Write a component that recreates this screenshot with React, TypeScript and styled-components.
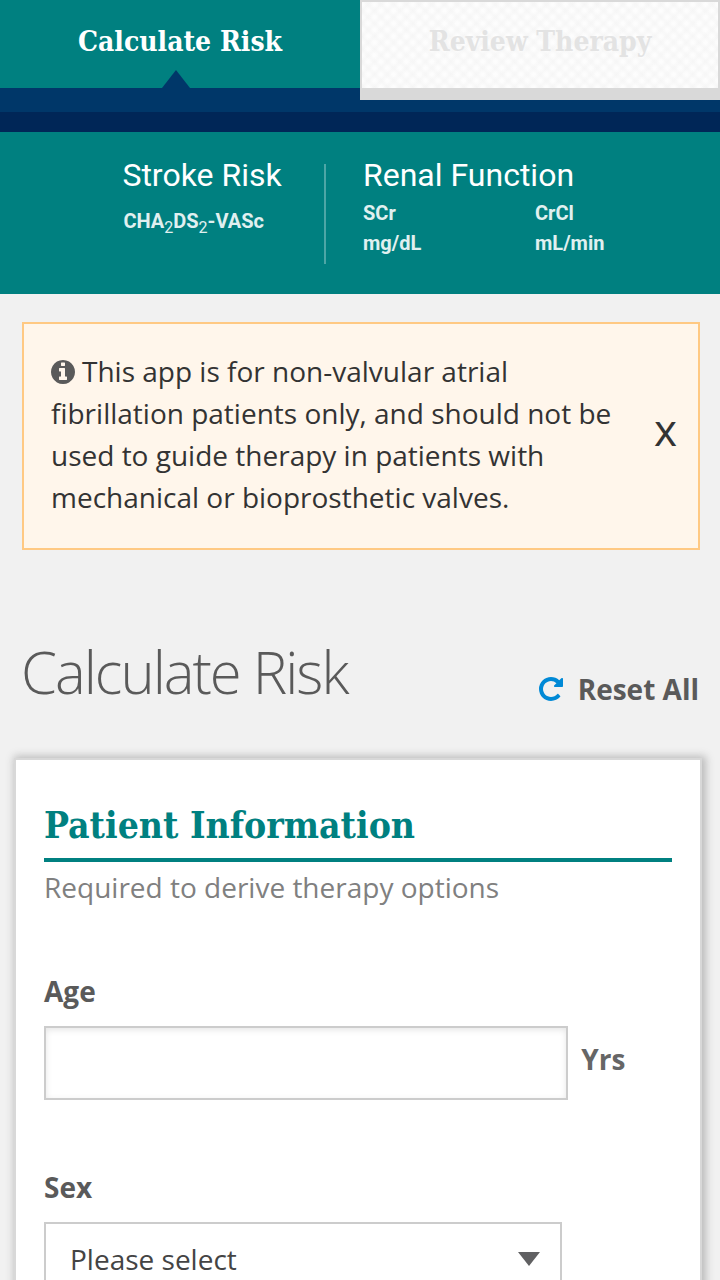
import React from "react";
import styled, { createGlobalStyle } from "styled-components";

const teal = "#008080";
const slab = `"DejaVu Serif Condensed", "DejaVu Serif", serif`;

const GlobalStyle = createGlobalStyle`
  *, *::before, *::after { box-sizing: border-box; }
  body {
    margin: 0;
    background: #f1f1f1;
    color: #5a5a5a;
    font: 400 28px/42px "Open Sans", sans-serif;
  }
  h1, h2, h3, p { margin: 0; }
  button, input, select { font: inherit; color: inherit; border-radius: 0; }
  button { padding: 0; border: 0; background: none; cursor: pointer; }
`;

const Tabs = styled.nav`
  display: grid;
  grid-template-columns: 1fr 1fr;
  align-items: start;
  height: 132px;
  background: #003769;
  border-bottom: 20px solid #002657;
`;

const Tab = styled.button`
  position: relative;
  height: 88px;
  padding-bottom: 4px;
  background: ${teal};
  color: #fff;
  font: 700 28px/36px ${slab};

  &[aria-selected="true"]::after {
    content: "";
    position: absolute;
    bottom: 0;
    left: calc(50% - 18px);
    border: 14px solid transparent;
    border-top: 0;
    border-bottom: 18px solid #003769;
  }

  &:disabled {
    height: 100px;
    border: 2px solid #d9d9d9;
    border-bottom-width: 12px;
    padding-bottom: 6px;
    color: #e3e3e3;
    background:
      repeating-linear-gradient(45deg, #f3f3f370 0 1px, transparent 4px 6px, #f3f3f370 9px),
      repeating-linear-gradient(-45deg, #f3f3f370 0 1px, transparent 4px 6px, #f3f3f370 9px),
      #fdfdfd;
  }
`;

const Summary = styled.section`
  display: flex;
  min-height: 162px;
  padding: 32px 0 30px;
  background: ${teal};
  color: #fff;
  font-family: Roboto, sans-serif;
`;

const StrokeRisk = styled.div`
  width: calc(45% + 2px);
  padding-left: 17%;
  border-right: 2px solid #4da6a6;
`;

const RenalFunction = styled.div`
  flex: 1;
  padding-left: 37px;
`;

const SummaryTitle = styled.h2`
  font-size: 32px;
  font-weight: 400;
  line-height: 22px;
`;

const Score = styled.p`
  margin: 20px 0 0 1px;
  color: #e0f0f0;
  font-size: 20px;
  font-weight: 700;
  line-height: 30px;
`;

const Sub = styled.sub`
  font-size: 16px;
  font-weight: 400;
  line-height: 0;
`;

const Results = styled.dl`
  display: grid;
  grid-template-columns: 172px 1fr;
  margin: 12px 0 0;
  color: #e0f0f0;
  font-size: 20px;
  font-weight: 700;
  line-height: 30px;

  dd { margin: 0; }
`;

const Notice = styled.aside`
  display: flex;
  align-items: center;
  gap: 24px;
  margin: 28px 20px 0 22px;
  padding: 26px 21px 30px 27px;
  border: 2px solid #ffc983;
  background: #fff6eb;
  color: #333;
`;

const NoticeText = styled.p`
  flex: 1;
`;

const InfoIcon = styled.svg`
  width: 24px;
  height: 24px;
  margin-right: 7px;
  vertical-align: -2px;
  fill: #5a5a5a;
`;

const Close = styled.button`
  padding-bottom: 10px;
  font-size: 44px;
  line-height: 40px;
`;

const Heading = styled.header`
  display: flex;
  justify-content: space-between;
  align-items: flex-end;
  margin: 82px 21px 48px;
`;

const PageTitle = styled.h1`
  padding-top: 2px;
  font-size: 58px;
  font-weight: 300;
  line-height: 76px;
  letter-spacing: -2px;
`;

const Reset = styled.button`
  display: flex;
  align-items: center;
  gap: 15px;
  font-weight: 700;

  svg { width: 24px; height: 24px; fill: #0089d6; }
`;

const Card = styled.section`
  margin: 0 18px 28px 14px;
  padding: 28px 28px 60px;
  border: 2px solid #d8d8d8;
  background: #fff;
  box-shadow: 2px 0 8px 2px #bbb;
`;

const CardTitle = styled.h2`
  padding: 12px 0 8px;
  border-bottom: 4px solid ${teal};
  color: ${teal};
  font: 700 37px/50px ${slab};
`;

const CardNote = styled.p`
  margin: 4px 0 62px;
  color: #808080;
`;

const Field = styled.div`
  margin-bottom: 66px;
`;

const Label = styled.label`
  display: block;
  margin-bottom: 14px;
  font-weight: 700;
`;

const Control = styled.div<{ $width: string }>`
  position: relative;
  width: ${(p) => p.$width};
`;

const InputRow = styled.div`
  display: flex;
  align-items: center;
  gap: 13px;
`;

const NumberInput = styled.input`
  display: block;
  width: 100%;
  height: 74px;
  padding: 0 24px;
  border: 2px solid #ccc;
  background: #fff;
  box-shadow: inset 0 2px 6px #e6e6e6;
`;

const Unit = styled.span`
  padding-bottom: 8px;
  color: #666;
  font-weight: 700;
`;

const Select = styled.select`
  display: block;
  width: 100%;
  height: 74px;
  padding: 0 60px 0 24px;
  border: 2px solid #ccc;
  background: #fff;
  color: #444;
  appearance: none;
`;

const Arrow = styled.svg`
  position: absolute;
  top: 30px;
  right: 22px;
  width: 22px;
  height: 14px;
  fill: #606062;
  pointer-events: none;
`;

export default function App() {
  return (
    <>
      <GlobalStyle />
      <Tabs role="tablist">
        <Tab role="tab" aria-selected="true">Calculate Risk</Tab>
        <Tab role="tab" aria-selected="false" disabled>Review Therapy</Tab>
      </Tabs>
      <Summary>
        <StrokeRisk>
          <SummaryTitle>Stroke Risk</SummaryTitle>
          <Score>CHA<Sub>2</Sub>DS<Sub>2</Sub>-VASc</Score>
        </StrokeRisk>
        <RenalFunction>
          <SummaryTitle>Renal Function</SummaryTitle>
          <Results>
            <div><dt>SCr</dt><dd>mg/dL</dd></div>
            <div><dt>CrCl</dt><dd>mL/min</dd></div>
          </Results>
        </RenalFunction>
      </Summary>
      <main>
        <Notice>
          <NoticeText>
            <InfoIcon viewBox="128 128 1536 1536" aria-hidden="true">
              <path d="M1152 1376v-160q0-14-9-23t-23-9h-96v-512q0-14-9-23t-23-9h-320q-14 0-23 9t-9 23v160q0 14 9 23t23 9h96v320h-96q-14 0-23 9t-9 23v160q0 14 9 23t23 9h448q14 0 23-9t9-23zm-128-896v-160q0-14-9-23t-23-9h-192q-14 0-23 9t-9 23v160q0 14 9 23t23 9h192q14 0 23-9t9-23zm640 416q0 209-103 385.500t-279.500 279.500-385.500 103-385.500-103-279.500-279.500-103-385.500 103-385.500 279.500-279.500 385.500-103 385.500 103 279.500 279.500 103 385.500z" />
            </InfoIcon>
            This app is for non-valvular atrial fibrillation patients only, and should not be used to guide therapy in patients with mechanical or bioprosthetic valves.
          </NoticeText>
          <Close aria-label="Close">x</Close>
        </Notice>
        <Heading>
          <PageTitle>Calculate Risk</PageTitle>
          <Reset>
            <svg viewBox="128 128 1536 1536" aria-hidden="true">
              <path d="M1664 256v448q0 26-19 45t-45 19h-448q-42 0-59-40-17-39 14-69l138-138q-148-137-349-137-104 0-198.500 40.500t-163.500 109.500-109.500 163.500-40.500 198.500 40.500 198.500 109.500 163.500 163.500 109.500 198.500 40.500q119 0 225-52t179-147q7-10 23-12 15 0 25 9l137 138q9 8 9.500 20.500t-7.500 22.500q-109 132-264 204.500t-327 72.500q-156 0-298-61t-245-164-164-245-61-298 61-298 164-245 245-164 298-61q147 0 284.500 55.500t244.500 156.500l130-129q29-31 70-14 39 17 39 59z" />
            </svg>
            Reset All
          </Reset>
        </Heading>
        <Card>
          <CardTitle>Patient Information</CardTitle>
          <CardNote>Required to derive therapy options</CardNote>
          <Field>
            <Label htmlFor="age">Age</Label>
            <InputRow>
              <Control $width="calc(83% + 3px)">
                <NumberInput id="age" type="text" inputMode="numeric" />
              </Control>
              <Unit>Yrs</Unit>
            </InputRow>
          </Field>
          <Field>
            <Label htmlFor="sex">Sex</Label>
            <Control $width="calc(82% + 3px)">
              <Select id="sex" defaultValue="">
                <option value="">Please select</option>
                <option>Female</option>
                <option>Male</option>
              </Select>
              <Arrow viewBox="0 0 22 14" aria-hidden="true">
                <path d="M0 0h22L11 14z" />
              </Arrow>
            </Control>
          </Field>
        </Card>
      </main>
    </>
  );
}
